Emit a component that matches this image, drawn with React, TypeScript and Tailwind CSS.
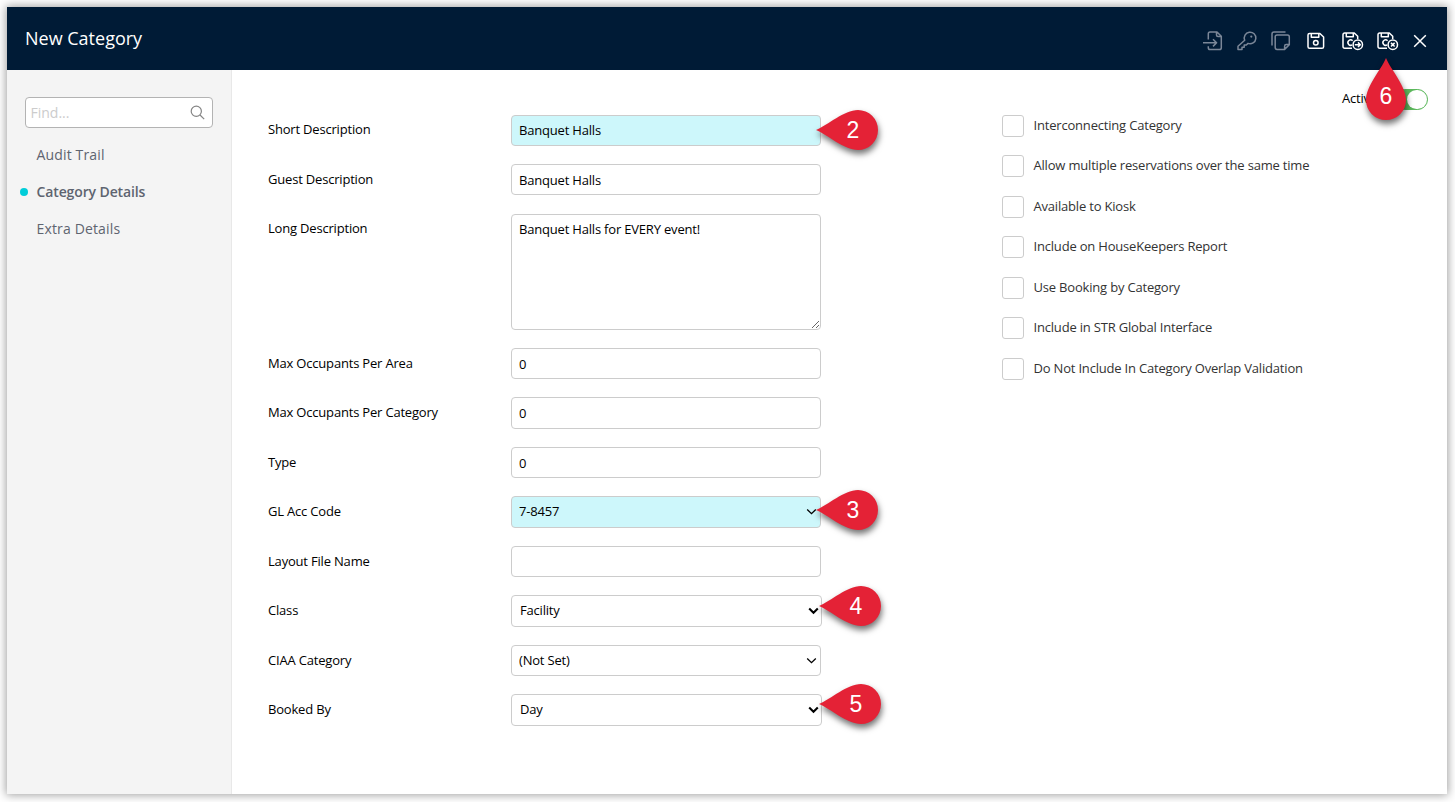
import React from "react";

type Field = { label: string; value: string; kind?: "text" | "area" | "select" | "bold"; tint?: boolean };

const fields: Field[] = [
  { label: "Short Description", value: "Banquet Halls", tint: true },
  { label: "Guest Description", value: "Banquet Halls" },
  { label: "Long Description", value: "Banquet Halls for EVERY event!", kind: "area" },
  { label: "Max Occupants Per Area", value: "0" },
  { label: "Max Occupants Per Category", value: "0" },
  { label: "Type", value: "0" },
  { label: "GL Acc Code", value: "7-8457", kind: "select", tint: true },
  { label: "Layout File Name", value: "" },
  { label: "Class", value: "Facility", kind: "bold" },
  { label: "CIAA Category", value: "(Not Set)", kind: "select" },
  { label: "Booked By", value: "Day", kind: "bold" },
];

const options = [
  "Interconnecting Category",
  "Allow multiple reservations over the same time",
  "Available to Kiosk",
  "Include on HouseKeepers Report",
  "Use Booking by Category",
  "Include in STR Global Interface",
  "Do Not Include In Category Overlap Validation",
];

function Control({ value, kind, tint }: Field) {
  const bg = tint ? "bg-[#cdf7fb]" : "bg-white";
  if (kind === "area") {
    return (
      <textarea
        defaultValue={value}
        className="block h-[116px] w-[310px] resize rounded border border-[#ccc] bg-white px-[7px] pt-[5px] leading-[18px] outline-none"
      />
    );
  }
  if (kind === "select" || kind === "bold") {
    const bold = kind === "bold";
    return (
      <div className={bold ? "relative w-[311px]" : "relative w-[310px]"}>
        <select
          className={`block h-[31.2px] w-full appearance-none rounded border border-[#ccc] outline-none ${bold ? "pl-2" : "pl-[7px]"} ${bg}`}
        >
          <option>{value}</option>
        </select>
        <svg
          className={bold ? "absolute top-[12px] right-[3px]" : "absolute top-[12px] right-[4px]"}
          width="11"
          height="8"
          viewBox="0 0 11 8"
          fill="none"
          stroke="#000"
          strokeWidth={bold ? 2.1 : 1.3}
        >
          <path d="M1.2 1.5 5.5 5.7 9.8 1.5" />
        </svg>
      </div>
    );
  }
  return (
    <input
      defaultValue={value}
      className={`block h-[31.2px] w-[310px] rounded border border-[#ccc] px-[7px] outline-none ${bg}`}
    />
  );
}

function ImportIcon() {
  return (
    <svg width="20" height="20" viewBox="0 0 20 20" fill="none" stroke="#7b8798" strokeWidth="1.5" strokeLinejoin="round">
      <path d="M5.3 8.5V2.8Q5.3 1 7 1H14l4.3 4.3v11.4q0 1.8-1.8 1.8H7q-1.7 0-1.7-1.8v-1.5M13.5 1v3q0 1.5 1.5 1.5h3.3M0 11.8h13M10 8.2l3.6 3.6-3.6 3.6" />
    </svg>
  );
}

function KeyIcon() {
  return (
    <svg width="20" height="20" viewBox="0 0 20 20" fill="none" stroke="#7b8798" strokeWidth="1.5" strokeLinejoin="round">
      <path d="M7.7 9.2A5.8 5.8 0 1 1 11 12.4L9.3 14H7.2v2.2H5v2.2H1v-3.1Z" />
      <circle cx="14.3" cy="5.6" r="1.1" fill="#7b8798" stroke="none" />
    </svg>
  );
}

function CopyIcon() {
  return (
    <svg width="20" height="20" viewBox="0 0 20 20" fill="none" stroke="#7b8798" strokeWidth="1.5" strokeLinejoin="round">
      <path d="M1 14.5V3Q1 1 3 1h11.5M6 4h10.5q1.8 0 1.8 1.8v8l-4.7 4.6H6q-1.8 0-1.8-1.8V5.8Q4.2 4 6 4ZM18.3 13.6h-3q-1.7 0-1.7 1.7v3" />
    </svg>
  );
}

function SaveIcon() {
  return (
    <svg width="18" height="18" viewBox="0 0 18 18" fill="none" stroke="#fff" strokeWidth="1.5" strokeLinejoin="round">
      <path d="M2.6 1.5h10.3l3.7 3.5v9.7q0 1.6-1.6 1.6H2.6q-1.6 0-1.6-1.6V3.1q0-1.6 1.6-1.6ZM4.3 1.5v3.7h7.5V1.5" />
      <circle cx="8.8" cy="10.7" r="2.3" />
    </svg>
  );
}

function SaveActionIcon({ close }: { close?: boolean }) {
  return (
    <svg width="22" height="20" viewBox="0 0 22 20" fill="none" stroke="#fff" strokeWidth="1.5" strokeLinejoin="round">
      <path d="M10 17.2H2.7q-1.7 0-1.7-1.7V3.7Q1 2 2.7 2h9.6l3.4 3.3v2.6M4.3 2v3.7h7V2M10.6 9.7A2.7 2.7 0 1 0 10.2 13.8" />
      <circle cx="15.8" cy="13.7" r="4.7" />
      {close ? <path d="m14 11.9 3.6 3.6m0-3.6L14 15.5" /> : <path d="M12.8 13.7h5.4m-2.2-2.3 2.3 2.3-2.3 2.3" />}
    </svg>
  );
}

function Pin({ n, place, down }: { n: number; place: string; down?: boolean }) {
  return (
    <div className={`absolute z-10 ${place}`}>
      <svg
        width={down ? 40 : 62}
        height={down ? 62 : 40}
        viewBox={down ? "0 0 40 62" : "0 0 62 40"}
        className="overflow-visible drop-shadow-[1px_4px_3px_rgba(0,0,0,0.55)]"
      >
        <path
          fill="#e42236"
          d={
            down
              ? "M20 0C25 12 40 28 40 42a20 20 0 0 1-40 0C0 28 15 12 20 0Z"
              : "M0 20C12 15 28 0 42 0a20 20 0 0 1 0 40C28 40 12 25 0 20Z"
          }
        />
      </svg>
      <span
        className={`absolute inset-0 flex items-center justify-center font-['Liberation_Sans',sans-serif] text-[23px] leading-none tracking-normal text-white ${down ? "pt-[14px]" : "pt-px pl-[12px]"}`}
      >
        {n}
      </span>
    </div>
  );
}

export default function App() {
  return (
    <div className="relative h-[802px] w-[1455px] overflow-hidden bg-white pt-[7px] pl-[7px] font-['Open_Sans',sans-serif] text-[13px] tracking-[-0.19px] text-black">
      <div className="flex h-[787px] w-[1440px] flex-col bg-white shadow-[0_0_9px_1px_rgba(0,0,0,0.38)]">
        <header className="flex h-[63px] shrink-0 items-center justify-between bg-[#001b36] pr-[20.5px] pl-[18px] text-white">
          <h1 className="text-[18px] tracking-normal">New Category</h1>
          <div className="flex items-center pt-[4px]">
            <div className="flex gap-[14px]">
              <ImportIcon />
              <KeyIcon />
              <CopyIcon />
            </div>
            <div className="ml-[16px] flex items-center gap-[17px]">
              <SaveIcon />
              <div className="flex gap-[13px]">
                <SaveActionIcon />
                <SaveActionIcon close />
              </div>
            </div>
            <svg className="ml-[14px]" width="14" height="14" viewBox="0 0 14 14" stroke="#fff" strokeWidth="1.5">
              <path d="m1.2 1.2 11.6 11.6m0-11.6L1.2 12.8" />
            </svg>
          </div>
        </header>
        <div className="flex min-h-0 flex-1">
          <aside className="w-[225px] shrink-0 border-r border-[#e8e8e8] bg-[#f4f4f4] pt-[27px] pl-[18px]">
            <div className="flex h-[31px] w-[188px] items-center justify-between rounded border border-[#b3b3b3] bg-white pr-[7px] pl-[4.5px]">
              <span className="text-[14px] tracking-normal text-[#ccc]">Find...</span>
              <svg width="15" height="15" viewBox="0 0 15 15" fill="none" stroke="#858585" strokeWidth="1.2">
                <circle cx="6.3" cy="6.3" r="5.1" />
                <path d="m10 10 4.2 4.2" />
              </svg>
            </div>
            <nav className="mt-[8px] text-[14px] tracking-[0.15px] text-[#5e6470]">
              <div className="flex h-[37px] items-center pl-[11.5px]">Audit Trail</div>
              <div className="-ml-[5px] flex h-[37px] items-center font-semibold tracking-[-0.12px]">
                <span className="mr-[8.5px] h-[8px] w-[8px] rounded-full bg-[#00cdd9]" />
                Category Details
              </div>
              <div className="flex h-[37px] items-center pl-[11.5px]">Extra Details</div>
            </nav>
          </aside>
          <main className="flex flex-1 pt-[44.7px] pl-[36px]">
            <form className="w-[734px] shrink-0">
              {fields.map((f) => (
                <div key={f.label} className={f.kind === "area" ? "flex h-[134.25px]" : "flex h-[49.5px]"}>
                  <label className="w-[243px] pt-[5.6px] leading-[18px]">{f.label}</label>
                  <Control {...f} />
                </div>
              ))}
            </form>
            <div className="-mt-[26px] flex flex-col">
              <div className="flex h-[22px] items-center pl-[340px]">
                <span className="w-[52px] pb-[2px]">Active</span>
                <span className="flex h-[21px] w-[34px] justify-end rounded-full border border-[#5cb85c] bg-[#5cb85c]">
                  <span className="h-[19px] w-[20px] rounded-full bg-white" />
                </span>
              </div>
              <div className="pt-[4px]">
                {options.map((o) => (
                  <label key={o} className="flex h-[40.5px] text-[#333]">
                    <span className="mr-[9.5px] h-[22px] w-[22px] rounded-[3px] border border-[#ccc] bg-white" />
                    <span className="pt-px leading-[18px]">{o}</span>
                  </label>
                ))}
              </div>
            </div>
          </main>
        </div>
      </div>
      <Pin n={2} place="top-[110px] left-[816px]" />
      <Pin n={3} place="top-[490px] left-[816px]" />
      <Pin n={4} place="top-[586px] left-[819px]" />
      <Pin n={5} place="top-[684px] left-[819px]" />
      <Pin n={6} place="top-[58px] left-[1366px]" down />
    </div>
  );
}
